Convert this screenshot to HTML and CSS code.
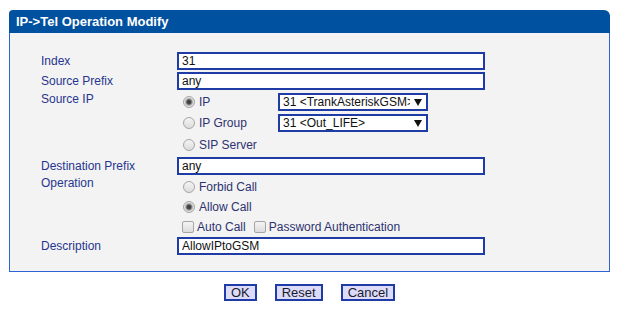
FILE: index.html
```html
<!DOCTYPE html>
<html lang="en">
  <head>
    <meta charset="UTF-8" />
    <title>IP-&gt;Tel Operation Modify</title>
    <link rel="stylesheet" href="styles.css">
  </head>
  <body>
    <div class="page">
      <div class="panel-title">IP-&gt;Tel Operation Modify</div>
      <div class="panel-body">
        <div class="form-grid">
          <div class="label">Index</div>
          <div class="field"><input class="text-input" type="text" value="31" /></div>

          <div class="label">Source Prefix</div>
          <div class="field"><input class="text-input" type="text" value="any" /></div>

          <div class="label label-top src-ip">Source IP</div>
          <div class="field">
            <input class="radio" type="radio" name="src" checked />
            <span class="opt opt-fixed">IP</span>
            <span class="select-wrap">
              <select class="select"><option>31 &lt;TrankAsteriskGSM&gt;</option></select>
            </span>
          </div>
          <div class="field">
            <input class="radio" type="radio" name="src" />
            <span class="opt opt-fixed">IP Group</span>
            <span class="select-wrap">
              <select class="select"><option>31 &lt;Out_LIFE&gt;</option></select>
            </span>
          </div>
          <div class="field">
            <input class="radio" type="radio" name="src" />
            <span class="opt">SIP Server</span>
          </div>

          <div class="label">Destination Prefix</div>
          <div class="field"><input class="text-input" type="text" value="any" /></div>

          <div class="label label-top operation">Operation</div>
          <div class="field">
            <input class="radio" type="radio" name="op" />
            <span class="opt">Forbid Call</span>
          </div>
          <div class="field">
            <input class="radio" type="radio" name="op" checked />
            <span class="opt">Allow Call</span>
          </div>
          <div class="field">
            <input class="checkbox" type="checkbox" />
            <span class="opt opt-gap">Auto Call</span>
            <input class="checkbox" type="checkbox" />
            <span class="opt">Password Authentication</span>
          </div>

          <div class="label">Description</div>
          <div class="field"><input class="text-input" type="text" value="AllowIPtoGSM" /></div>
        </div>
      </div>
      <div class="buttons">
        <button class="btn" type="button">OK</button>
        <button class="btn" type="button">Reset</button>
        <button class="btn" type="button">Cancel</button>
      </div>
    </div>
  </body>
</html>
```

FILE: styles.css
```css
body {
  margin: 0;
  font-family: "Liberation Sans", Arial, sans-serif;
  font-size: 12px;
  background: #ffffff;
}

.page {
  width: 601px;
  margin: 10px 0 0 9px;
}

.panel-title {
  height: 23px;
  line-height: 23px;
  padding-left: 7px;
  background: #00519f;
  color: #ffffff;
  font-weight: bold;
  font-size: 13px;
  border-radius: 4px 6px 0 0;
}

.panel-body {
  background: #f3f3f3;
  border: 1px solid #2f62d6;
  border-top: none;
  padding: 18px 0 16px 31px;
}

.form-grid {
  display: grid;
  grid-template-columns: 136px 310px;
  grid-template-rows: 20px 20px 21px 22px 22px 20px 21px 20px 19px 19px;
}

.label {
  align-self: center;
  color: #27358f;
  line-height: 14px;
}

.label-top {
  align-self: start;
}

.src-ip {
  grid-row: 3 / span 3;
  margin-top: 1px;
}

.operation {
  grid-row: 7 / span 3;
}

.field {
  grid-column: 2;
  display: flex;
  align-items: center;
}

.text-input {
  box-sizing: border-box;
  width: 308px;
  height: 18px;
  margin: 0;
  padding: 0 3px;
  border: 2px solid #1f3ca6;
  background: #ffffff;
  font-family: inherit;
  font-size: 12px;
  color: #111111;
  outline: none;
}

/* radio and checkbox look of the old device UI */
.radio,
.checkbox {
  appearance: none;
  -webkit-appearance: none;
  width: 12px;
  height: 12px;
  margin: 0 4px 0 6px;
  border: 1px solid #a6a6a6;
  background: linear-gradient(#f4f4f4, #dcdcdc);
  box-sizing: border-box;
  flex: none;
}

.radio {
  border-radius: 50%;
}

.radio:checked {
  background: radial-gradient(circle, #3a3a3a 0, #4a4a4a 2px, #9a9a9a 3px, #e4e4e4 4.5px, #dcdcdc 6px);
}

.checkbox {
  margin: 0 3px 0 5px;
  border-radius: 2px;
}

.checkbox + .opt + .checkbox {
  margin-left: 8px;
}

.opt {
  color: #2d3270;
  line-height: 14px;
}

.opt-fixed {
  width: 79px;
}

.select-wrap {
  position: relative;
  display: inline-block;
}

.select {
  appearance: none;
  -webkit-appearance: none;
  box-sizing: border-box;
  width: 150px;
  height: 18px;
  margin: 0;
  padding: 0 16px 0 3px;
  border: 2px solid #1f3ca6;
  border-radius: 0;
  background: #ffffff;
  font-family: inherit;
  font-size: 12px;
  color: #111111;
  outline: none;
}

.select-wrap::after {
  content: "";
  position: absolute;
  right: 6px;
  top: 6px;
  border-left: 4px solid transparent;
  border-right: 4px solid transparent;
  border-top: 7px solid #111111;
  pointer-events: none;
}

.buttons {
  display: flex;
  justify-content: center;
  gap: 18px;
  margin-top: 12px;
}

.btn {
  height: 17px;
  margin: 0;
  padding: 0 5px;
  border: 2px solid #1f3ca6;
  background: #dcdcfa;
  font-family: inherit;
  font-size: 13px;
  line-height: 13px;
  color: #1a1a2a;
}
```
